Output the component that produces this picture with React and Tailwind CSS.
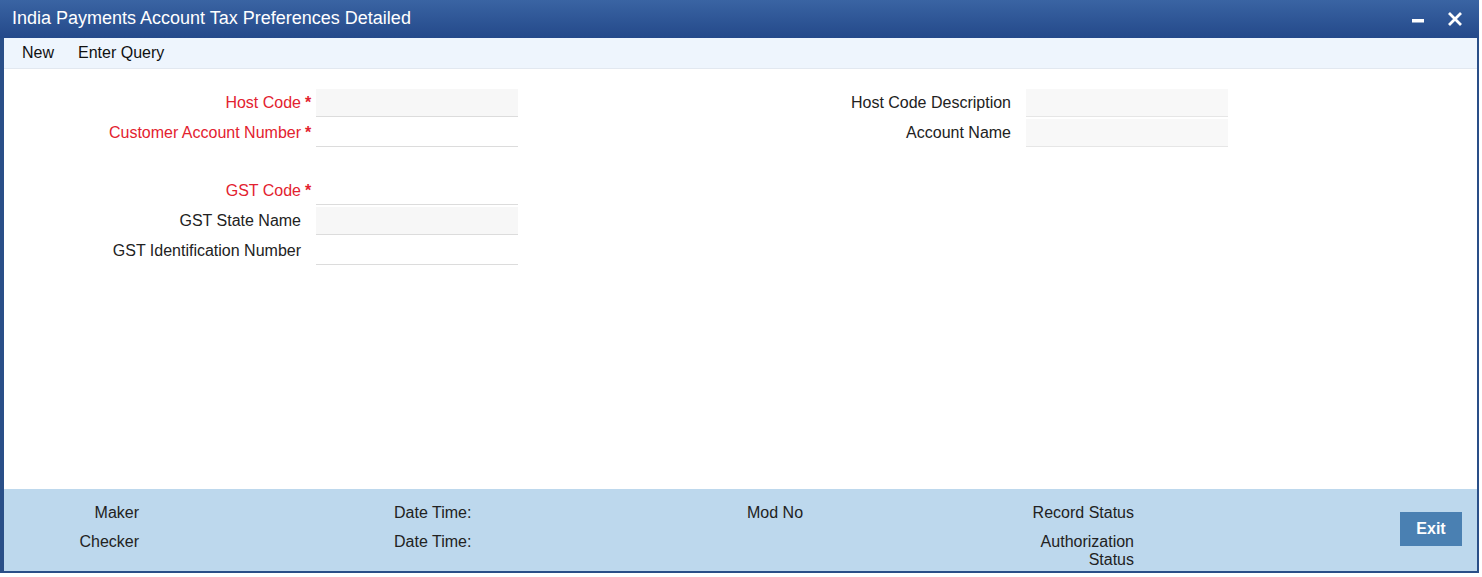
import React from 'react';

const font = { fontFamily: '"Liberation Sans", Arial, sans-serif' };

const Field = ({ label, required, filled }) => (
  <div className="flex items-center h-[28px]">
    <div className={`w-[297px] text-right text-[16px] leading-[18px] ${required ? 'text-[#e3222f]' : 'text-[#222]'}`}>
      {label}
    </div>
    <div className="w-[15px] pl-[4px] text-[16px] leading-[18px] text-[#e3222f] font-bold">{required ? '*' : ''}</div>
    <div className={`w-[202px] h-[28px] border-b border-[#dcdcdc] ${filled ? 'bg-[#f7f7f7]' : 'bg-white'}`} />
  </div>
);

const RightField = ({ label }) => (
  <div className="flex items-center h-[28px]">
    <div className="w-[300px] text-right text-[16px] leading-[18px] text-[#222]">{label}</div>
    <div className="w-[15px]" />
    <div className="w-[202px] h-[28px] border-b border-[#e6e6e6] bg-[#f8f8f8]" />
  </div>
);

export default function App() {
  return (
    <div className="w-[1482px] h-[577px] bg-white" style={font}>
      <div className="w-[1479px] h-[573px] flex flex-col border-l-4 border-r-2 border-b-2 border-[#2a4f88]">
        {/* Title bar */}
        <div className="h-[38px] -ml-[4px] -mr-[2px] flex items-center bg-gradient-to-b from-[#3a64a3] to-[#24498a] pl-[12px] pr-[16px]">
          <div className="text-white text-[18px] leading-[20px] -mt-[2px]">India Payments Account Tax Preferences Detailed</div>
          <div className="ml-auto flex items-center gap-[22px] text-white">
            <svg width="14" height="14" viewBox="0 0 14 14"><rect x="1" y="7" width="12" height="3.5" fill="white" /></svg>
            <svg width="16" height="16" viewBox="0 0 16 16"><path d="M2 2 L14 14 M14 2 L2 14" stroke="white" strokeWidth="2.8" /></svg>
          </div>
        </div>

        {/* Toolbar */}
        <div className="h-[31px] flex items-center gap-[24px] pl-[18px] bg-[#eef5fd] border-b border-[#e2e8f0] text-[16px] text-[#111]">
          <span>New</span>
          <span>Enter Query</span>
        </div>

        {/* Form */}
        <div className="flex-1 pt-[20px] flex">
          <div className="flex flex-col">
            <div className="flex flex-col gap-[2px]">
              <Field label="Host Code" required filled />
              <Field label="Customer Account Number" required />
            </div>
            <div className="flex flex-col gap-[2px] mt-[30px]">
              <Field label="GST Code" required />
              <Field label="GST State Name" filled />
              <Field label="GST Identification Number" />
            </div>
          </div>
          <div className="ml-[193px] flex flex-col gap-[2px]">
            <RightField label="Host Code Description" />
            <RightField label="Account Name" />
          </div>
        </div>

        {/* Footer */}
        <div className="h-[82px] bg-[#bdd8ed] flex items-start pt-[15px] text-[16px] leading-[18px] text-[#222]">
          <div className="w-[135px] flex flex-col items-end gap-[11px]">
            <span>Maker</span>
            <span>Checker</span>
          </div>
          <div className="ml-[255px] w-[353px] flex flex-col gap-[11px]">
            <span>Date Time:</span>
            <span>Date Time:</span>
          </div>
          <div className="w-[387px] flex justify-between">
            <span>Mod No</span>
            <div className="flex flex-col items-end gap-[11px]">
              <span>Record Status</span>
              <span className="w-[100px] text-right">Authorization Status</span>
            </div>
          </div>
          <button className="ml-[266px] mt-[8px] w-[62px] h-[34px] bg-[#4a80b2] text-white font-bold text-[16px]">Exit</button>
        </div>
      </div>
    </div>
  );
}
